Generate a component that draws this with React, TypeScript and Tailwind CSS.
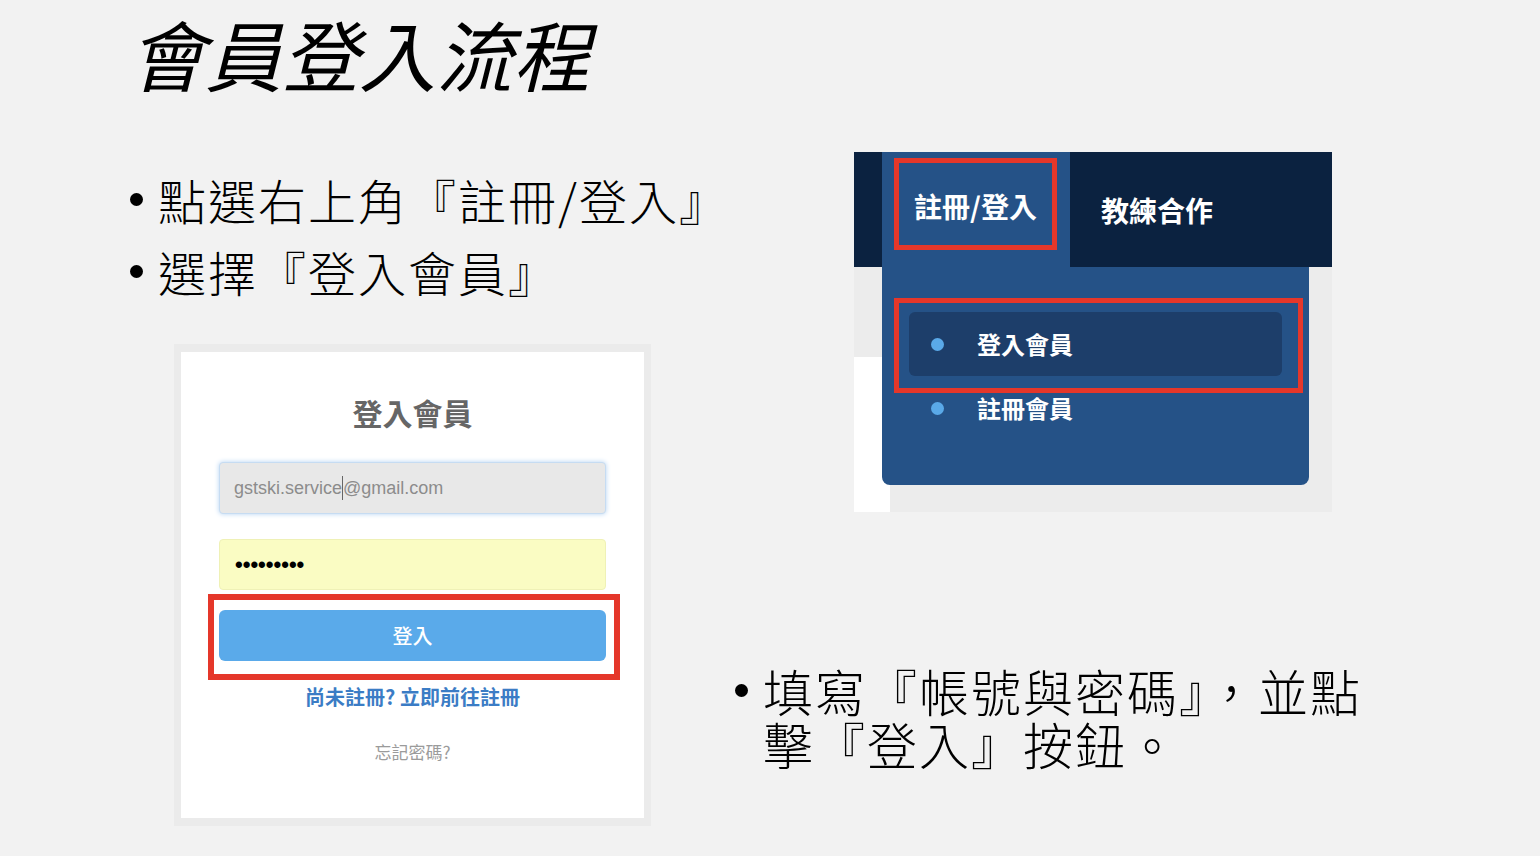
const cjk = "font-['Noto_Sans_CJK_TC',sans-serif]";

const Bullet = ({ children, size }: { children: React.ReactNode; size: string }) => (
  <div className="flex items-start">
    <span className={`mr-[15px] shrink-0 rounded-full bg-black ${size}`} />
    <div>{children}</div>
  </div>
);

const LoginCard = () => (
  <div className="ml-[44px] mt-[37px] w-[477px] bg-[#ebebeb] p-[7px] pb-[8px] pt-[8px]">
    <div className="flex h-[466px] flex-col bg-white px-[38px] pt-[40px]">
      <h2 className={`${cjk} text-center text-[30px] font-bold leading-[40px] text-[#666]`}>
        登入會員
      </h2>
      <div className="mt-[30px] flex h-[52px] items-center rounded-[4px] border border-[#c6dcf2] bg-[#e8e8e8] pl-[14px] shadow-[0_0_5px_#b3d2f2]">
        <span className="font-['Liberation_Sans',sans-serif] text-[18px] text-[#8c8c8c]">
          gstski.service
        </span>
        <span className="inline-block h-[24px] w-px bg-[#666]" />
        <span className="font-['Liberation_Sans',sans-serif] text-[18px] text-[#8c8c8c]">
          @gmail.com
        </span>
      </div>
      <div className="mt-[25px] flex h-[51px] items-center rounded-[4px] border border-[#eff1b6] bg-[#fafcc3] pl-[15px]">
        <span className="font-['Liberation_Sans',sans-serif] text-[22px] font-bold text-black">
          •••••••••
        </span>
      </div>
      <div className="-ml-[11px] -mr-[14px] mt-[4px] border-[6px] border-[#e5372a] pb-[13px] pl-[5px] pr-[8px] pt-[10px]">
        <button
          className={`${cjk} flex h-[51px] w-full items-center justify-center rounded-[6px] bg-[#5aaaea] text-[20px] font-medium text-white`}
        >
          登入
        </button>
      </div>
      <p className={`${cjk} mt-[4px] text-center text-[20px] font-bold leading-[26px] text-[#3b7cc5]`}>
        尚未註冊? 立即前往註冊
      </p>
      <p className={`${cjk} mt-[30px] text-center text-[17px] leading-[24px] text-[#9b9b9b]`}>
        忘記密碼?
      </p>
    </div>
  </div>
);

const NavShot = () => (
  <div className={`${cjk} ml-[119px] flex h-[360px] w-[478px] flex-col bg-[#ececec]`}>
    <div className="flex h-[115px] bg-[#0b2240]">
      <div className="w-[28px]" />
      <div className="w-[188px] bg-[#255287] pl-[12px] pr-[13px] pt-[6px] pb-[17px]">
        <div className="flex h-full items-center justify-center border-[5px] border-[#e5372a] pt-[4px] text-[28px] font-bold text-white">
          註冊/登入
        </div>
      </div>
      <div className="flex items-center pl-[31px] text-[28px] font-bold text-white">
        教練合作
      </div>
    </div>
    <div className="relative flex-1">
      <div className="mt-[90px] h-[155px] w-[36px] bg-white" />
      <div className="absolute left-[28px] top-0 h-[218px] w-[427px] rounded-b-[8px] bg-[#255287] pt-[31px]">
        <div className="ml-[12px] w-[409px] border-[5px] border-[#e5372a] pb-[12px] pl-[10px] pr-[16px] pt-[9px]">
          <div className="flex h-[64px] items-center rounded-[6px] bg-[#1d3e6a] pl-[22px]">
            <span className="h-[13px] w-[13px] rounded-full bg-[#5aa9e8]" />
            <span className="ml-[33px] text-[24px] font-bold text-white">登入會員</span>
          </div>
        </div>
        <div className="flex h-[30px] items-center pl-[49px]">
          <span className="h-[13px] w-[13px] rounded-full bg-[#5aa9e8]" />
          <span className="ml-[33px] text-[24px] font-bold text-white">註冊會員</span>
        </div>
      </div>
    </div>
  </div>
);

export default function App() {
  return (
    <div className={`${cjk} h-[856px] w-[1540px] overflow-hidden bg-[#f2f2f2] text-black`}>
      <div className="h-[152px] pl-[128px] pt-[3px]">
        <h1 className="text-[77px] font-normal italic leading-[100px]">會員登入流程</h1>
      </div>
      <div className="flex">
        <div className="w-[735px] pl-[130px]">
          <div className="mt-[11px] text-[48px] font-light leading-[72px] tracking-[2px]">
            <Bullet size="mt-[30px] h-[13px] w-[13px]">點選右上角『註冊/登入』</Bullet>
            <Bullet size="mt-[30px] h-[13px] w-[13px]">選擇『登入會員』</Bullet>
          </div>
          <LoginCard />
        </div>
        <div className="flex-1">
          <NavShot />
          <div className="mt-[152px] whitespace-nowrap text-[50px] font-light leading-[53px] tracking-[2px]">
            <Bullet size="mt-[20px] h-[13px] w-[13px]">
              填寫『帳號與密碼』，並點
              <br />
              擊『登入』按鈕。
            </Bullet>
          </div>
        </div>
      </div>
    </div>
  );
}
